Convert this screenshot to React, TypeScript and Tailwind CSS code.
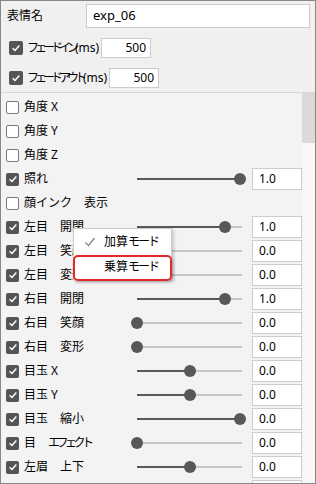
import React from 'react';

type Item = { label: React.ReactNode; checked: boolean; value?: string; pos?: number };

const kana = 'tracking-[-3.5px]';

const items: Item[] = [
  { label: '角度 X', checked: false },
  { label: '角度 Y', checked: false },
  { label: '角度 Z', checked: false },
  { label: '照れ', checked: true, value: '1.0', pos: 1 },
  { label: '顔インク　表示', checked: false },
  { label: '左目　開閉', checked: true, value: '1.0', pos: 0.85 },
  { label: '左目　笑顔', checked: true, value: '0.0', pos: 0 },
  { label: '左目　変形', checked: true, value: '0.0', pos: 0 },
  { label: '右目　開閉', checked: true, value: '1.0', pos: 0.85 },
  { label: '右目　笑顔', checked: true, value: '0.0', pos: 0 },
  { label: '右目　変形', checked: true, value: '0.0', pos: 0 },
  { label: '目玉 X', checked: true, value: '0.0', pos: 0.515 },
  { label: '目玉 Y', checked: true, value: '0.0', pos: 0.515 },
  { label: '目玉　縮小', checked: true, value: '0.0', pos: 1 },
  {
    label: (
      <>
        目　<span className={kana}>エフェクト</span>
      </>
    ),
    checked: true,
    value: '0.0',
    pos: 0,
  },
  { label: '左眉　上下', checked: true, value: '0.0', pos: 0.515 },
  // next row is cut off at the bottom edge, only its box tops show
  { label: '', checked: true, value: '', pos: 0.515 },
];

function Check({ checked, size = 'h-[13px] w-[13px]' }: { checked: boolean; size?: string }) {
  if (!checked) {
    return <span className={`${size} shrink-0 rounded-[2px] border border-[#7a7a7a] bg-white`} />;
  }
  return (
    <span className={`${size} flex shrink-0 items-center justify-center rounded-[2px] bg-[#555555]`}>
      <svg viewBox="0 0 12 12" className="h-[10px] w-[10px]">
        <path d="M2 6.3 L4.8 9 L10 3" fill="none" stroke="#fff" strokeWidth="1.8" />
      </svg>
    </span>
  );
}

function Slider({ pos }: { pos: number }) {
  const x = Math.round(pos * 103);
  return (
    <div className="relative h-3 w-[117px] shrink-0">
      <div className="absolute left-[6px] top-[5px] h-[2px] w-[105px] bg-[#c6c6c6]" />
      <div className="absolute left-[6px] top-[5px] h-[2px] bg-[#585858]" style={{ width: x }} />
      <div className="absolute top-0 h-3 w-3 rounded-full bg-[#585858]" style={{ left: x }} />
    </div>
  );
}

function Row({ item }: { item: Item }) {
  return (
    <div className="flex h-6 shrink-0 items-center pl-[5px]">
      <Check checked={item.checked} />
      <span className="ml-[5px] flex-1 whitespace-pre">{item.label}</span>
      {item.value !== undefined && (
        <>
          <Slider pos={item.pos ?? 0} />
          <div className="ml-1 flex h-[22px] w-[50px] shrink-0 items-center border border-[#cccccc] bg-white pl-[6px]">
            {item.value}
          </div>
        </>
      )}
    </div>
  );
}

export default function App() {
  return (
    <div
      className="relative flex h-[484px] w-[316px] flex-col overflow-hidden border border-[#888888] bg-[#f0f0f0] text-[12px] text-black"
      style={{ fontFamily: '"Noto Sans", "Noto Sans CJK JP", sans-serif' }}
    >
      <div className="flex shrink-0 flex-col pt-[3px] pb-[4px]">
        <div className="flex h-6 items-center pl-[6px]">
          <span className="w-[79px]">表情名</span>
          <div className="flex h-6 w-[224px] items-center border border-[#cccccc] bg-white pl-[6px] text-[13px]">
            exp_06
          </div>
        </div>
        <div className="mt-[10px] flex h-5 items-center pl-[8px]">
          <Check checked size="h-[14px] w-[14px]" />
          <span className="ml-[4px] w-[74px] whitespace-nowrap">
            <span className="tracking-[-4px]">フェードイン</span>(ms)
          </span>
          <div className="flex h-5 w-[50px] items-center justify-end border border-[#cccccc] bg-white pr-[4px]">
            500
          </div>
        </div>
        <div className="mt-[10px] flex h-5 items-center pl-[8px]">
          <Check checked size="h-[14px] w-[14px]" />
          <span className="ml-[4px] w-[82px] whitespace-nowrap">
            <span className="tracking-[-4px]">フェードアウト</span>(ms)
          </span>
          <div className="flex h-5 w-[50px] items-center justify-end border border-[#cccccc] bg-white pr-[4px]">
            500
          </div>
        </div>
      </div>
      <div className="flex min-h-0 flex-1 border-t border-[#d6d6d6] bg-[#f3f3f3]">
        <div className="flex min-w-0 flex-1 flex-col overflow-hidden pt-[2px]">
          {items.map((it, i) => (
            <Row key={i} item={it} />
          ))}
        </div>
        <div className="w-[13px] shrink-0 bg-[#f7f7f7]">
          <div className="h-[50px] bg-[#dadada]" />
        </div>
      </div>

      <div className="absolute left-[72px] top-[227px] flex h-[52px] w-[99px] flex-col border border-[#cccccc] bg-white shadow-[2px_2px_3px_rgba(0,0,0,0.18)]">
        <div className="flex h-[26px] items-center">
          <svg viewBox="0 0 12 12" className="ml-[10px] h-[12px] w-[12px]">
            <path d="M1.5 6.5 L4.5 9.5 L10.5 2" fill="none" stroke="#8a8a8a" strokeWidth="1.4" />
          </svg>
          <span className="ml-[8px] whitespace-nowrap">
            加算<span className="tracking-[-2px]">モード</span>
          </span>
        </div>
        <div className="flex h-[24px] items-center whitespace-nowrap pl-[30px]">
          乗算<span className="tracking-[-2px]">モード</span>
        </div>
      </div>
      <div className="absolute left-[72px] top-[254px] h-[26px] w-[99px] rounded-[5px] border-2 border-[#e8262e] shadow-[1px_1px_3px_rgba(0,0,0,0.25)]" />
    </div>
  );
}
